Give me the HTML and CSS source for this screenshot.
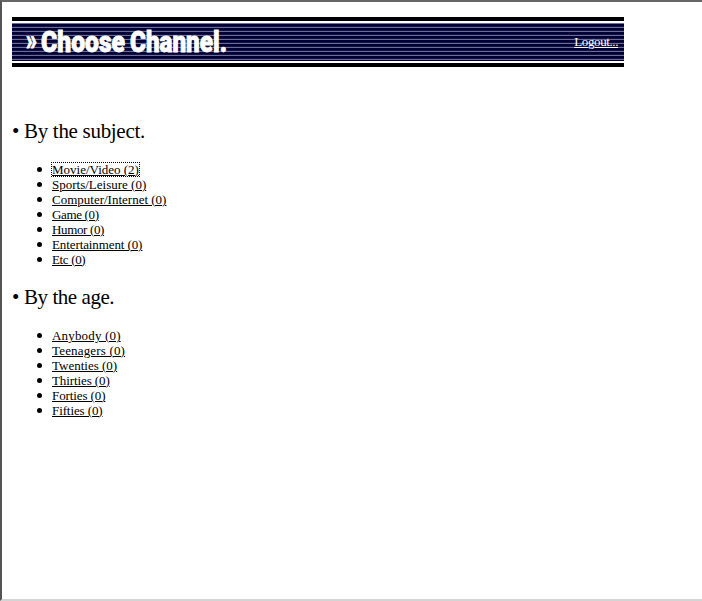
FILE: index.html
```
<!DOCTYPE html>
<html lang="en">
<head>
<meta charset="utf-8">
<title>Choose Channel</title>
<link rel="stylesheet" href="styles.css">
</head>
<body>
<main class="frame">
  <header class="banner">
    <div class="stripes">
      <svg class="title" width="240" height="38" role="heading" aria-level="1">
        <text x="14" y="27" textLength="11" lengthAdjust="spacingAndGlyphs">»</text>
        <text x="29" y="29" textLength="84" lengthAdjust="spacingAndGlyphs">Choose</text>
        <text x="118" y="29" textLength="97" lengthAdjust="spacingAndGlyphs">Channel.</text>
      </svg>
      <a class="logout" href="#">Logout...</a>
    </div>
  </header>
  <section>
    <h2 class="subject"><span class="dot">•</span>By the subject.</h2>
    <ul>
      <li><a class="focused" href="#">Movie/Video (2)</a></li>
      <li><a href="#">Sports/Leisure (0)</a></li>
      <li><a href="#">Computer/Internet (0)</a></li>
      <li><a class="tighter" href="#">Game (0)</a></li>
      <li><a class="tighter" href="#">Humor (0)</a></li>
      <li><a class="tight" href="#">Entertainment (0)</a></li>
      <li><a class="tighter" href="#">Etc (0)</a></li>
    </ul>
  </section>
  <section>
    <h2 class="age"><span class="dot">•</span>By the age.</h2>
    <ul>
      <li><a class="loose" href="#">Anybody (0)</a></li>
      <li><a class="loose" href="#">Teenagers (0)</a></li>
      <li><a href="#">Twenties (0)</a></li>
      <li><a class="tight" href="#">Thirties (0)</a></li>
      <li><a class="tight" href="#">Forties (0)</a></li>
      <li><a class="tight" href="#">Fifties (0)</a></li>
    </ul>
  </section>
</main>
</body>
</html>
```
FILE: styles.css
```
* { box-sizing: border-box; }
body {
  margin: 0;
  background: #fff;
  color: #000;
  font: 13px/15px "Liberation Serif", serif;
}
.frame {
  height: 601px;
  padding: 15px 0 0 10px;
  border-top: 2px solid #666;
  border-left: 2px solid #555;
  border-bottom: 2px solid #d4d4d4;
}
.banner {
  width: 612px;
  height: 50px;
  padding: 2px 0;
  border-top: 4px solid #000;
  border-bottom: 4px solid #000;
  margin-bottom: 50px;
}
.stripes {
  display: flex;
  align-items: center;
  justify-content: space-between;
  height: 38px;
  padding-right: 6px;
  background: repeating-linear-gradient(#6c6c94 0 1px, #000034 1px 3px, #101044 3px 4px);
}
.title {
  display: block;
  overflow: visible;
  fill: #fff;
  stroke: #fff;
  stroke-width: 0.9px;
  font: 900 29px "Roboto", sans-serif;
}
.logout { color: #fff; letter-spacing: -0.4px; margin-bottom: 2px; }
h2 {
  display: flex;
  margin: 0;
  height: 29px;
  font-size: 21px;
  font-weight: 400;
  line-height: 29px;
}
.dot { width: 12px; }
.subject { letter-spacing: -0.3px; }
.age { letter-spacing: -0.45px; }
ul {
  margin: 16px 0;
  padding: 0 0 0 25px;
  list-style: none;
}
li {
  display: flex;
  align-items: center;
  height: 15px;
}
li::before {
  content: "";
  width: 5px;
  height: 5px;
  margin-right: 10px;
  border-radius: 50%;
  background: #000;
}
a { color: #000; text-underline-offset: 1px; text-decoration-thickness: 1px; }
.loose { letter-spacing: 0.17px; }
.tight { letter-spacing: -0.1px; }
.tighter { letter-spacing: -0.35px; }
.focused { outline: 1px dotted #000; outline-offset: -1px; padding: 0 1px; margin: 0 -1px; }
```
